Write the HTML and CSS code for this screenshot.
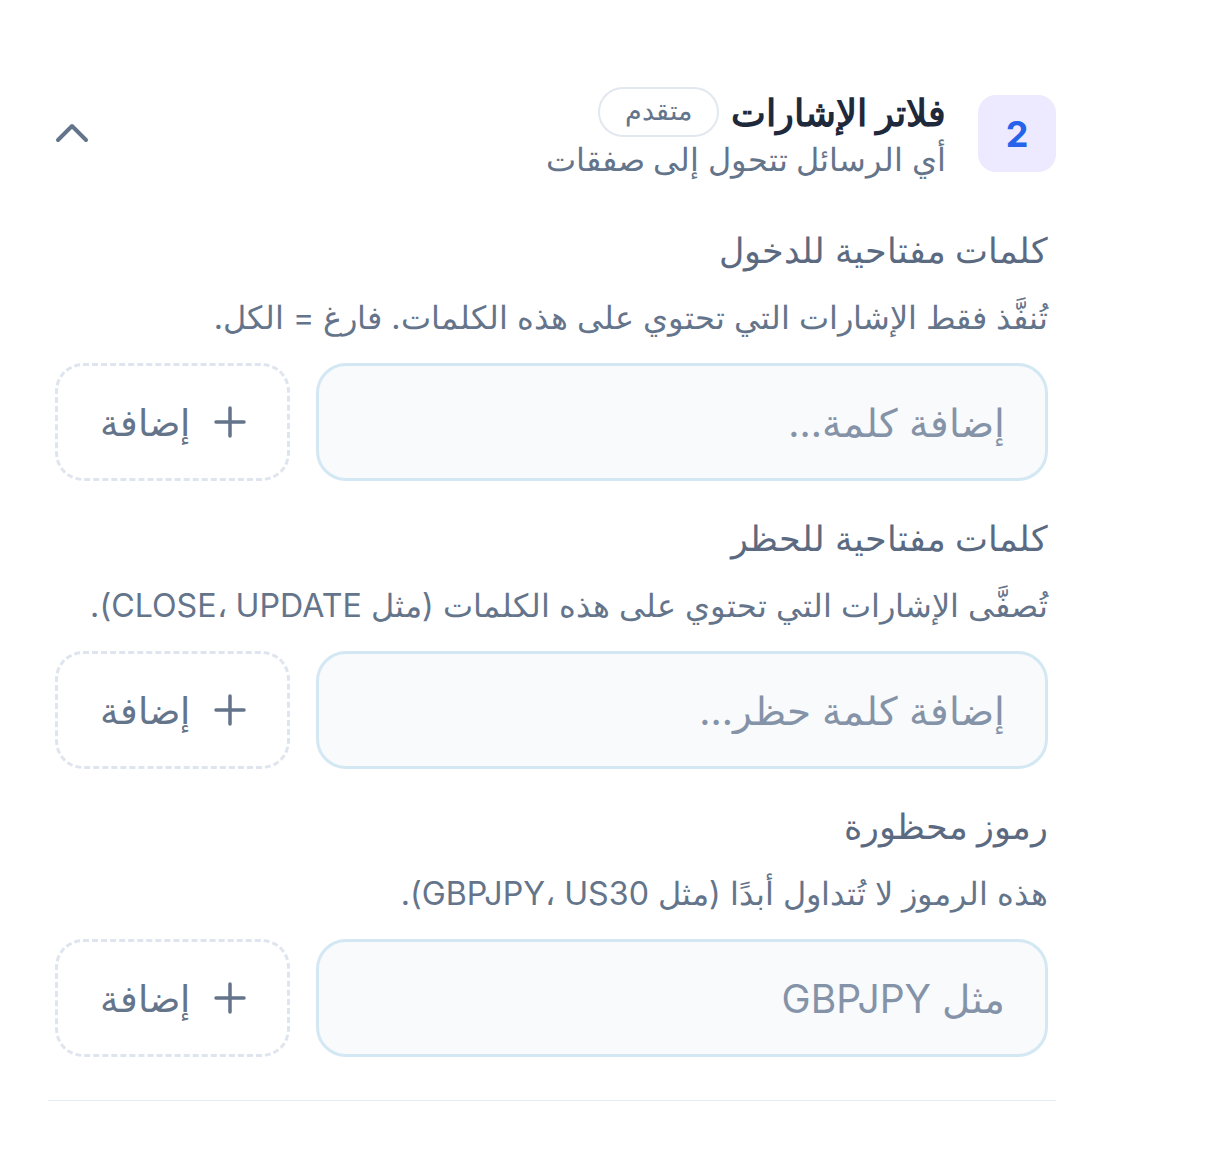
FILE: index.html
```html
<!DOCTYPE html>
<html lang="ar" dir="rtl">
<head>
    <meta charset="UTF-8">
    <meta name="viewport" content="width=device-width, initial-scale=1.0">
    <title>فلاتر الإشارات</title>
    <link rel="stylesheet" href="styles.css">
</head>
<body>
    <div class="panel">
        <div class="panel-header">
            <div class="step">2</div>
            <div class="heading">
                <div class="title-row">
                    <h2>فلاتر الإشارات</h2>
                    <span class="pill">متقدم</span>
                </div>
                <p class="subtitle">أي الرسائل تتحول إلى صفقات</p>
            </div>
            <button class="toggle" aria-label="طي">
                <svg width="34" height="22" viewBox="0 0 34 22" fill="none" stroke="currentColor" stroke-width="4" stroke-linecap="round" stroke-linejoin="round">
                    <path d="M3 18 L17 4 L31 18"/>
                </svg>
            </button>
        </div>

        <div class="field">
            <label for="entryInput">كلمات مفتاحية للدخول</label>
            <p class="hint">تُنفَّذ فقط الإشارات التي تحتوي على هذه الكلمات. فارغ = الكل.</p>
            <div class="field-row">
                <input type="text" id="entryInput" placeholder="إضافة كلمة...">
                <button class="add-btn">
                    <svg class="plus" width="32" height="32" viewBox="0 0 32 32" fill="none" stroke="currentColor" stroke-width="3.5" stroke-linecap="round">
                        <path d="M16 2 V30 M2 16 H30"/>
                    </svg>
                    إضافة
                </button>
            </div>
        </div>

        <div class="field">
            <label for="blockInput">كلمات مفتاحية للحظر</label>
            <p class="hint">تُصفَّى الإشارات التي تحتوي على هذه الكلمات (مثل CLOSE، UPDATE).</p>
            <div class="field-row">
                <input type="text" id="blockInput" placeholder="إضافة كلمة حظر...">
                <button class="add-btn">
                    <svg class="plus" width="32" height="32" viewBox="0 0 32 32" fill="none" stroke="currentColor" stroke-width="3.5" stroke-linecap="round">
                        <path d="M16 2 V30 M2 16 H30"/>
                    </svg>
                    إضافة
                </button>
            </div>
        </div>

        <div class="field">
            <label for="symbolInput">رموز محظورة</label>
            <p class="hint">هذه الرموز لا تُتداول أبدًا (مثل GBPJPY، US30).</p>
            <div class="field-row">
                <input type="text" id="symbolInput" placeholder="مثل GBPJPY">
                <button class="add-btn">
                    <svg class="plus" width="32" height="32" viewBox="0 0 32 32" fill="none" stroke="currentColor" stroke-width="3.5" stroke-linecap="round">
                        <path d="M16 2 V30 M2 16 H30"/>
                    </svg>
                    إضافة
                </button>
            </div>
        </div>
    </div>
</body>
</html>
```

FILE: styles.css
```css
body {
    margin: 0;
    background-color: #ffffff;
    font-family: Inter, "Noto Sans", sans-serif;
    color: #64748b;
}
.panel {
    width: 1008px;
    margin: 0 auto 0 48px;
    padding: 87px 0 8px;
    border-bottom: 1px solid #e5e9f0;
}
.panel-header {
    display: flex;
    align-items: flex-start;
    gap: 32px;
    margin-bottom: 46px;
}
.step {
    width: 78px;
    height: 77px;
    margin-top: 8px;
    border-radius: 18px;
    background-color: #ede9fe;
    color: #2563eb;
    font-size: 36px;
    font-weight: 700;
    display: flex;
    align-items: center;
    justify-content: center;
}
.heading {
    flex: 1;
}
.title-row {
    display: flex;
    align-items: center;
    gap: 12px;
    height: 50px;
}
h2 {
    margin: 0;
    font-size: 37px;
    font-weight: 700;
    color: #1e293b;
}
.pill {
    box-sizing: border-box;
    height: 50px;
    border: 2px solid #e2e8f0;
    border-radius: 26px;
    padding: 0 25px;
    font-size: 27px;
    color: #64748b;
    line-height: 44px;
}
.subtitle {
    margin: 1px 0 0;
    font-size: 32px;
    font-weight: 500;
    color: #64748b;
    line-height: 44px;
}
.toggle {
    background: none;
    border: none;
    padding: 0;
    margin: 35px 0 0 7px;
    color: #64748b;
    cursor: pointer;
}
.field {
    padding: 0 8px 0 7px;
    margin-bottom: 35px;
}
label {
    display: block;
    font-size: 34.8px;
    font-weight: 500;
    color: #5b6a81;
    line-height: 44px;
}
.hint {
    margin: 24px 0 23px;
    font-size: 32.2px;
    line-height: 44px;
    color: #64748b;
}
.field-row {
    display: flex;
    gap: 26px;
}
input[type="text"] {
    flex: 1;
    height: 118px;
    box-sizing: border-box;
    padding: 0 40px;
    border: 3px solid #d3e8f3;
    border-radius: 30px;
    background-color: #f8fafc;
    font-family: inherit;
    font-size: 39px;
    color: #334155;
}
input[type="text"]::placeholder {
    color: #8593a8;
}
.add-btn {
    width: 235px;
    height: 118px;
    border: 3px dashed #dfe5ee;
    border-radius: 28px;
    background-color: #ffffff;
    font-family: inherit;
    font-size: 37px;
    font-weight: 500;
    color: #64748b;
    cursor: pointer;
    display: flex;
    align-items: center;
    justify-content: center;
    gap: 24px;
}
.plus {
    flex-shrink: 0;
}
```
